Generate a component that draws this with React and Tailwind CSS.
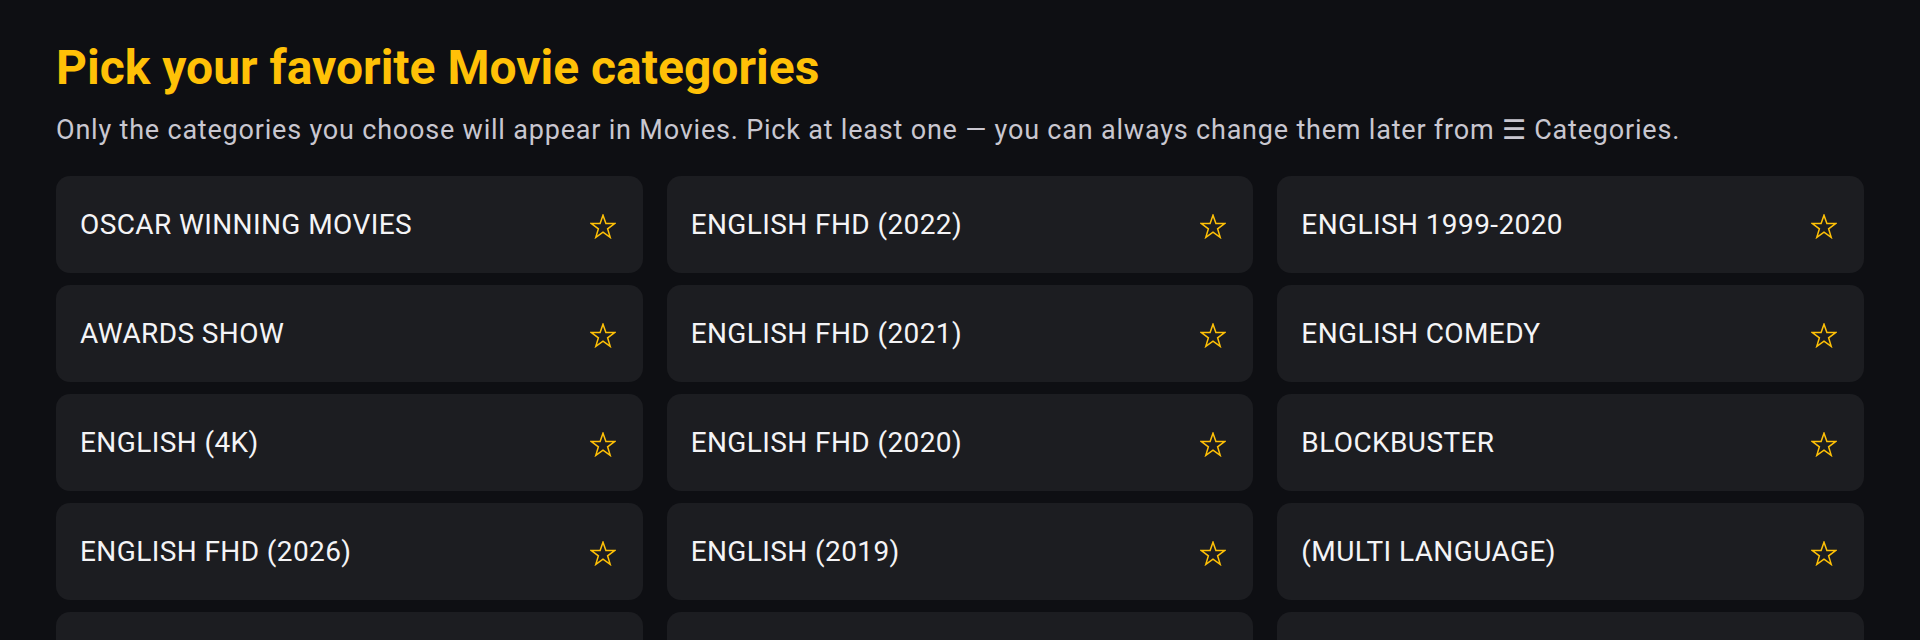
import { useState } from "react";

const categories = [
  "OSCAR WINNING MOVIES",
  "ENGLISH FHD (2022)",
  "ENGLISH 1999-2020",
  "AWARDS SHOW",
  "ENGLISH FHD (2021)",
  "ENGLISH COMEDY",
  "ENGLISH (4K)",
  "ENGLISH FHD (2020)",
  "BLOCKBUSTER",
  "ENGLISH FHD (2026)",
  "ENGLISH (2019)",
  "(MULTI LANGUAGE)",
  "ENGLISH FHD (2025)",
  "ENGLISH (2018)",
  "ENGLISH HORROR",
];

function StarIcon({ filled }) {
  return (
    <svg width="26" height="25" viewBox="0 0 26 25" className="mt-[3px] shrink-0">
      <polygon
        points="13,1.2 15.9,9.6 24.6,9.6 17.6,14.8 20.2,23.4 13,18.2 5.8,23.4 8.4,14.8 1.4,9.6 10.1,9.6"
        fill={filled ? "#ffc107" : "none"}
        stroke="#ffc107"
        strokeWidth="1.5"
        strokeLinejoin="miter"
      />
    </svg>
  );
}

function CategoryCard({ name, selected, onToggle }) {
  return (
    <button
      onClick={onToggle}
      className="flex h-[97px] items-center justify-between rounded-[14px] bg-[#1c1d21] pl-6 pr-[27px] text-left"
    >
      <span className="text-[28px] leading-none tracking-[0.4px] text-[#f4f4f6]">{name}</span>
      <StarIcon filled={selected} />
    </button>
  );
}

export default function App() {
  const [picked, setPicked] = useState([]);

  const toggle = (name) =>
    setPicked((p) => (p.includes(name) ? p.filter((n) => n !== name) : [...p, name]));

  return (
    <div className="min-h-screen bg-[#0e0f13] px-14 pt-[44px] font-['Roboto',sans-serif]">
      <h1 className="text-5xl font-bold leading-none text-[#ffc107]">
        Pick your favorite Movie categories
      </h1>
      <p className="mt-[22px] text-[27px] leading-8 tracking-[0.8px] text-[#c9c7d0]">
        Only the categories you choose will appear in Movies. Pick at least one — you can always
        change them later from ☰ Categories.
      </p>
      <div className="mt-[30px] grid grid-cols-3 gap-x-6 gap-y-3">
        {categories.map((c) => (
          <CategoryCard key={c} name={c} selected={picked.includes(c)} onToggle={() => toggle(c)} />
        ))}
      </div>
    </div>
  );
}
